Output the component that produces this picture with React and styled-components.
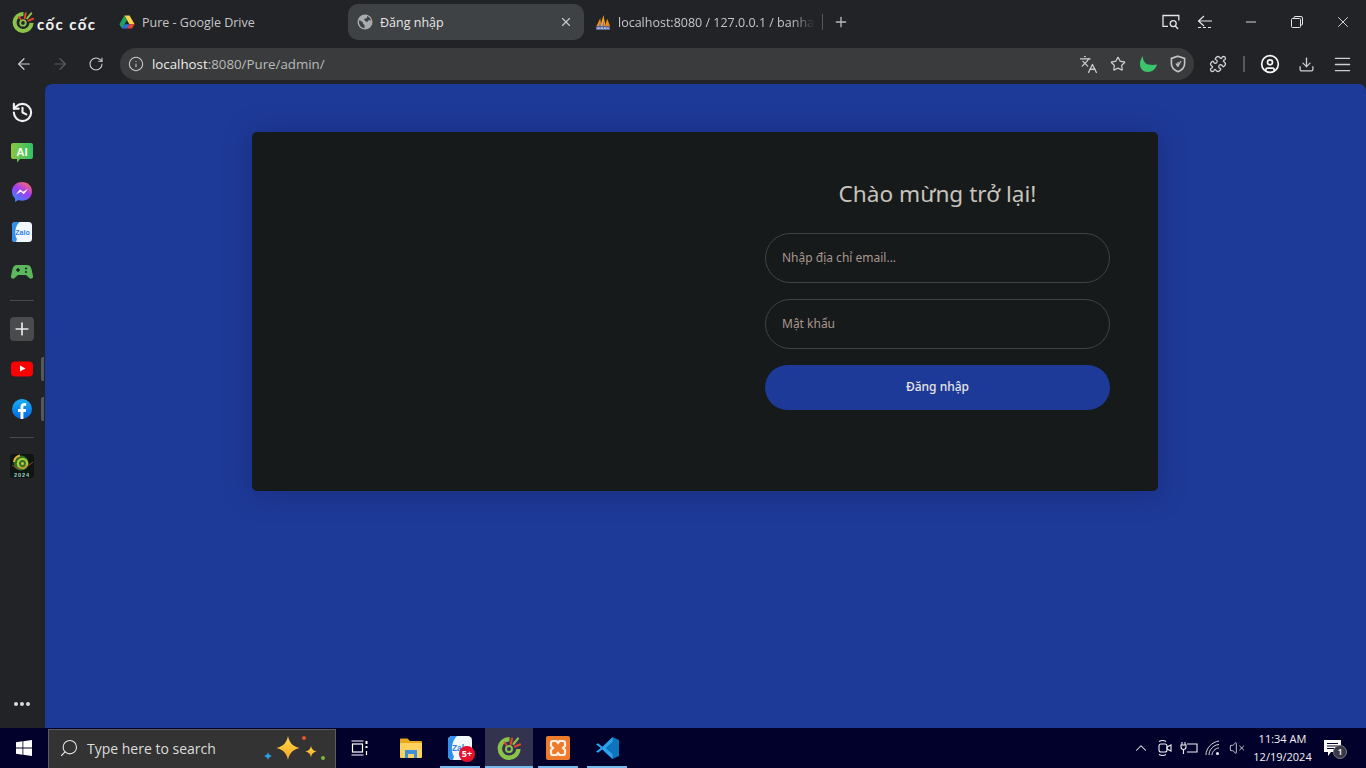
import React from "react";
import styled, { createGlobalStyle } from "styled-components";
import {
  ArrowLeft, ArrowRight, RotateCw, Info, Languages, Star, Puzzle, CircleUser, Download, Menu,
  Plus, X, Minus, History, Search, ChevronUp, VolumeX,
} from "lucide-react";

const Global = createGlobalStyle`
  html, body { margin: 0; padding: 0; height: 100%; overflow: hidden; background: #212326; }
  * { box-sizing: border-box; }
`;
const UI = `"Open Sans", "Noto Sans", sans-serif`;
const FORM = `"Noto Sans", "Open Sans", sans-serif`;

const Window = styled.div`display: flex; flex-direction: column; width: 1366px; height: 768px; background: #212326; font-family: ${UI};`;

/* Tab strip */
const TabStrip = styled.div`display: flex; align-items: flex-start; height: 48px; padding-top: 4px; color: #c4c6c8;`;
const BrandBox = styled.div`display: flex; align-items: center; gap: 3px; width: 110px; height: 36px; padding-left: 12px; flex: none;`;
const BrandText = styled.span`font: 700 15px "Lato", ${UI}; color: #f4f5f4; white-space: nowrap; margin-top: 3px; letter-spacing: 1.4px;`;
const Tabs = styled.div`display: flex; gap: 2px;`;
const Tab = styled.div`
  display: flex; align-items: center; gap: 7px; width: 236px; height: 36px; padding: 0 ${p => (p.$wide ? 7 : 12)}px 0 9px;
  border-radius: 10px; font-size: 12.5px; position: relative;
  background: ${p => (p.$active ? "#3f4244" : "transparent")};
  color: ${p => (p.$active ? "#e6e7e8" : "#c4c6c8")};
`;
const TabFavicon = styled.span`display: flex; width: 16px; height: 16px; flex: none; color: #a9abad;`;
const TabTitle = styled.span`
  flex: 1; white-space: nowrap; overflow: hidden;
  ${p => p.$fade && "-webkit-mask-image: linear-gradient(90deg,#000 88%,transparent 100%); mask-image: linear-gradient(90deg,#000 88%,transparent 100%);"}
`;
const TabClose = styled.span`display: flex; color: #c4c6c8; margin-right: -1px;`;
const TabSep = styled.span`width: 1px; height: 16px; margin-top: 10px; background: #55585a; flex: none;`;
const NewTab = styled.span`display: flex; align-items: center; justify-content: center; width: 36px; height: 36px; color: #b9bbbd; flex: none;`;
const StripRight = styled.div`display: flex; margin-left: auto; align-items: center; height: 36px;`;
const StripSlot = styled.span`display: flex; align-items: center; justify-content: center; width: ${p => p.$w}px; height: 36px; color: #e4e5e6; margin-right: ${p => p.$mr || 0}px;`;

/* Toolbar */
const Toolbar = styled.div`display: flex; align-items: flex-start; height: 36px; padding: 0 6px; flex: none;`;
const NavSlot = styled.span`display: flex; align-items: center; justify-content: center; width: 36px; height: 32px; color: ${p => (p.$dim ? "#5b5e60" : "#cdcfd1")}; flex: none;`;
const Address = styled.div`display: flex; align-items: center; flex: none; width: 1074px; height: 32px; margin: 0 6px; padding: 0 1px 0 8px; border-radius: 16px; background: #3a3b3c;`;
const InfoWrap = styled.span`display: flex; color: #c9cbcd; margin-right: 8px; flex: none;`;
const Url = styled.span`font-size: 13.3px; color: #b9bbbd; white-space: nowrap; flex: 1;`;
const Host = styled.span`color: #eceded;`;
const BarSlot = styled.span`display: flex; align-items: center; justify-content: center; width: 30px; height: 32px; color: #cdcfd1;`;
const ToolSep = styled.span`width: 2px; height: 16px; margin: 8px 7px; background: #56595b; flex: none;`;
const ProfileSlot = styled(NavSlot)`color: #f6f6f6;`;

/* Body */
const Body = styled.div`display: flex; flex: 1; min-height: 0;`;
const Sidebar = styled.div`display: flex; flex-direction: column; align-items: center; width: 45px; padding: 8px 1px 4px 0; flex: none;`;
const SideSlot = styled.div`display: flex; align-items: center; justify-content: center; width: 44px; height: 40px; position: relative; color: #f0f1f1; flex: none;`;
const Handle = styled.span`position: absolute; right: 0; top: 8px; width: 3px; height: 24px; border-radius: 2px 0 0 2px; background: #55585a;`;
const SideRule = styled.div`width: 24px; height: 1px; margin: 8px 0; background: #47494b; flex: none;`;
const SideEnd = styled(SideSlot)`margin-top: auto;`;
const PlusTile = styled.span`display: flex; align-items: center; justify-content: center; width: 24px; height: 24px; border-radius: 4px; background: #4a4b4c; color: #e9e9e9;`;
const Page = styled.main`flex: 1; background: #1e3a98; border-radius: 7px 7px 0 0; padding-top: 48px; display: flex; justify-content: center; align-items: flex-start; overflow: hidden;`;

/* Login card */
const Card = styled.section`
  display: grid; grid-template-columns: 453px 453px; width: 906px; height: 359px; margin-right: 1px;
  background: #171a1b; border-radius: 5px; box-shadow: 0 2px 28px rgba(20, 28, 90, .42);
`;
const Form = styled.form`grid-column: 2; display: flex; flex-direction: column; gap: 16px; padding: 48px 48px 0 60px; font-family: ${FORM};`;
const Title = styled.h1`margin: 0 0 8px; padding-bottom: 2px; height: 29px; font: 400 22.6px/27px ${FORM}; color: #c8c4bd; text-align: center; white-space: nowrap;`;
const Field = styled.input`
  display: block; width: 100%; height: 50px; padding: 0 16px 2px; border-radius: 25px;
  border: 1px solid #3f4446; background: #171a1b; color: #b2aca2; font: 400 12px ${FORM}; outline: none;
  &::placeholder { color: #a8968e; opacity: 1; }
`;
const Submit = styled.button`
  display: block; width: 100%; height: 45px; padding: 0 0 2px; border: 0; border-radius: 23px; background: #1e3a98;
  color: #e8e6e3; font: 500 12px ${FORM};
`;

/* Taskbar */
const Taskbar = styled.footer`display: flex; align-items: stretch; height: 40px; background: #02012c; flex: none; color: #fff;`;
const StartSlot = styled.span`display: flex; align-items: center; justify-content: center; width: 48px; flex: none;`;
const SearchBox = styled.div`display: flex; align-items: center; position: relative; width: 288px; margin-top: 1px; padding: 0 0 2px 10px; background: #333333; border: 1px solid #5c5c5c; border-bottom: 0; flex: none; color: #e6e6e6;`;
const SearchText = styled.span`font-size: 14px; margin-left: 8px; color: #dcdcdc; white-space: nowrap;`;
const Sparkles = styled.span`position: absolute; right: 2px; top: 1px; display: flex;`;
const TaskApps = styled.div`display: flex; gap: 1px; flex: none;`;
const TaskView = styled.span`display: flex; align-items: center; justify-content: center; width: 51px; padding-right: 3px; flex: none;`;
const AppSlot = styled.span`
  display: flex; align-items: center; justify-content: center; width: 48px; position: relative;
  background: ${p => (p.$active ? "#33334f" : "transparent")};
  &::after {
    content: ""; position: absolute; bottom: 0; height: 2px; background: #76b9ed;
    left: ${p => (p.$active ? 0 : 4)}px; right: ${p => (p.$active ? 0 : 4)}px;
    display: ${p => (p.$running ? "block" : "none")};
  }
`;
const Badge = styled.span`
  position: absolute; left: 23px; top: 18px; width: 16px; height: 16px; border-radius: 50%;
  background: #e8102a; color: #fff; font: 700 9px/16px ${UI}; text-align: center;
`;
const Tray = styled.div`display: flex; margin-left: auto; padding-right: 16px;`;
const TraySlot = styled.span`display: flex; align-items: center; justify-content: center; width: 24px; color: #f0f0f0;`;
const Clock = styled.div`display: flex; flex-direction: column; align-items: center; justify-content: center; width: 67px; font-size: 11px; line-height: 18px; color: #f2f2f2; white-space: nowrap;`;
const Notif = styled.span`display: flex; align-items: center; justify-content: center; width: 34px; position: relative;`;
const NotifCount = styled.span`
  position: absolute; left: 17px; top: 17px; width: 14px; height: 14px; border-radius: 50%;
  background: #3a3a44; border: 1px solid #77777f; color: #fff; font: 600 9px/12px ${UI}; text-align: center;
`;

/* Drawn logos */
const CocCocMark = ({ size = 22 }) => (
  <svg width={size} height={size} viewBox="0 0 24 24" fill="none">
    <path d="M12.500 3.200A9.300 9.300 0 1 0 21.400 13" stroke="#8bc34a" strokeWidth="4.400" />
    <circle cx="12" cy="13" r="3" stroke="#8bc34a" strokeWidth="2" />
    <path d="M15 2.500 13.800 8" stroke="#e2452f" strokeWidth="2.200" strokeLinecap="round" />
    <path d="M21 2.500 16.500 8" stroke="#8bc34a" strokeWidth="2.200" strokeLinecap="round" />
    <path d="M23 8.500 18 10.500" stroke="#e2452f" strokeWidth="2.200" strokeLinecap="round" />
    <path d="M7.500 6.500 9.500 9" stroke="#e2452f" strokeWidth="2" strokeLinecap="round" />
  </svg>
);
const DriveIcon = () => (
  <svg width="16" height="16" viewBox="0 0 16 16">
    <path d="M5.400 1.500h5.200l5 8.700H10.400z" fill="#ffd04b" />
    <path d="M5.400 1.500 8 6 3 14.600.4 10.200z" fill="#1fa463" />
    <path d="M10.600 10.200H5.600L3 14.600h5z" fill="#2f6fe0" />
    <path d="m15.600 10.200-2.600 4.400H8l2.500-4.400z" fill="#ea4335" />
  </svg>
);
const SiteGlobe = () => (
  <svg width="16" height="16" viewBox="0 0 16 16">
    <circle cx="8" cy="8" r="7.500" fill="#a9abad" />
    <path d="M2.500 6 6 8.500v1.200l1.500 1.300v3.200C4.500 13.800 2 11.400 2 8c0-.7.200-1.400.500-2zM10 1.900c2 .7 3.500 2.300 4 4.300h-2.500L10.500 8 8 7 7 5l3-1z" fill="#3f4244" />
  </svg>
);
const PmaIcon = () => (
  <svg width="17" height="17" viewBox="0 0 17 17">
    <path d="M1.500 12.500 5.500 4l1.300 8.500z" fill="#f29111" />
    <path d="M5.500 12.500 9 .5l2.200 12z" fill="#f8a01d" />
    <path d="M10.500 12.500 13 4.500l3 8z" fill="#f08a0c" />
    <path d="M4 12.500 5.500 8l1 4.500zM8 12.500 9 7l1.200 5.500z" fill="#6c78af" />
    <rect x="1" y="12.500" width="15" height="4" fill="#5f6b9f" rx=".5" />
    <path d="M2.500 14.500h12" stroke="#d8dcf0" strokeWidth="1.200" strokeDasharray="2.500 1" />
  </svg>
);
const RestoreIcon = () => (
  <svg width="12" height="12" viewBox="0 0 12 12" fill="none" stroke="currentColor">
    <path d="M3 2.500V1.500a1 1 0 0 1 1-1h6a1.500 1.500 0 0 1 1.500 1.500v6a1 1 0 0 1-1 1H9.500" />
    <rect x=".5" y="2.500" width="9" height="9" rx="1" />
  </svg>
);
const ScreenSearchIcon = () => (
  <svg width="18" height="16" viewBox="0 0 18 16" fill="none" stroke="currentColor" strokeWidth="1.300">
    <path d="M6 12.400H1V1.500h15.800v5" />
    <circle cx="11.200" cy="9.600" r="3" />
    <path d="m13.400 12 2.600 3" />
  </svg>
);
const TabSearchIcon = () => (
  <svg width="16" height="14" viewBox="0 0 16 14" fill="none" stroke="currentColor" strokeWidth="1.200">
    <path d="M7 1 1.500 6l5.500 5M1.500 6H15" />
    <path d="M1 12.500h14" strokeDasharray="3 2" />
  </svg>
);
const MoonIcon = () => (
  <svg width="19" height="18" viewBox="0 0 19 18">
    <path d="M4 1C3.500 5 6 9 9.500 9.500c2.500.5 5.500.5 8.500 0C17 14 13 17 9 17 4 17 1 13.500 1 9c0-3 1-6 3-8z" fill="#3cc46c" />
  </svg>
);
const ShieldIcon = () => (
  <svg width="16" height="18" viewBox="0 0 16 18" fill="none">
    <path d="M8 1.200 14.600 3.400v5.200c0 3.800-2.600 6.600-6.600 8.200C4 15.200 1.400 12.400 1.400 8.600V3.400z" stroke="#c4c6c8" strokeWidth="1.600" />
    <path d="M8 12V7M8 11l3-5M6 8.500l1.500 2.500" stroke="#c4c6c8" strokeWidth="1.200" />
  </svg>
);
const AiIcon = () => (
  <svg width="22" height="26" viewBox="0 -4 22 26">
    <defs><linearGradient id="ai" x1="0" x2="1" y1="0" y2="0"><stop offset="0" stopColor="#8cc63f" /><stop offset="1" stopColor="#2fc26a" /></linearGradient></defs>
    <path d="M2 0h18a2 2 0 0 1 2 2v12a2 2 0 0 1-2 2H9l-3 3.500V16H2a2 2 0 0 1-2-2V2a2 2 0 0 1 2-2z" fill="url(#ai)" />
    <text x="11" y="12.500" textAnchor="middle" fontFamily="Liberation Sans" fontWeight="700" fontSize="11.500" fill="#f4f8ef">AI</text>
  </svg>
);
const MessengerIcon = () => (
  <svg width="22" height="22" viewBox="0 0 22 22">
    <defs><linearGradient id="ms" x1=".2" x2=".8" y1="1" y2="0"><stop offset="0" stopColor="#2e8cff" /><stop offset=".55" stopColor="#a33df0" /><stop offset="1" stopColor="#ff6a6a" /></linearGradient></defs>
    <path d="M11 1C5.200 1 1 5 1 10.400c0 2.900 1.200 5.300 3.100 7V21l3.300-1.900c1.100.4 2.300.6 3.600.6 5.800 0 10-4 10-9.300S16.800 1 11 1z" fill="url(#ms)" />
    <path d="m5 13.500 4-5.200 3 2.500 4.800-2.800-4 5.200-3-2.500z" fill="#fff" />
  </svg>
);
const ZaloIcon = ({ size = 20 }) => (
  <svg width={size} height={size} viewBox="0 0 20 20">
    <rect width="20" height="20" rx="3.500" fill="#f3f8fe" />
    <path d="M3.500 0h4C3 4 2 13 5 17l-1 3h-.5A3.500 3.500 0 0 1 0 16.500v-13A3.500 3.500 0 0 1 3.500 0z" fill="#2f8fea" />
    <text x="10.500" y="12.500" textAnchor="middle" fontFamily="Liberation Sans" fontWeight="700" fontSize="7" fill="#2f7fe0">Zalo</text>
  </svg>
);
const GameIcon = () => (
  <svg width="22" height="16" viewBox="0 0 22 16">
    <path d="M6 1h10c2.500 0 3.800 1.500 4.500 4L22 12c.4 2.200-2 3.500-3.700 2L15 11H7l-3.300 3C2 15.500-.4 14.200 0 12L1.500 5C2.200 2.500 3.500 1 6 1z" fill="#5cb85c" />
    <path d="M5 6h4M7 4v4" stroke="#1d2a1d" strokeWidth="1.500" />
    <circle cx="15" cy="4.500" r="1.100" fill="#1d2a1d" /><circle cx="15" cy="8" r="1.100" fill="#1d2a1d" />
  </svg>
);
const YoutubeIcon = () => (
  <svg width="22" height="16" viewBox="0 0 22 16">
    <rect width="22" height="15" y=".5" rx="4" fill="#f00" />
    <path d="m9 4.500 5.500 3-5.500 3z" fill="#fff" />
  </svg>
);
const FacebookIcon = () => (
  <svg width="20" height="20" viewBox="0 0 20 20">
    <defs><linearGradient id="fb" x1="0" x2="0" y1="0" y2="1"><stop offset="0" stopColor="#19aff5" /><stop offset="1" stopColor="#0566e2" /></linearGradient></defs>
    <circle cx="10" cy="10" r="10" fill="url(#fb)" />
    <path d="M8.500 20v-7H6v-3h2.500V7.800c0-2.500 1.500-3.800 3.700-3.800l2 .2v2.500h-1.300c-1.200 0-1.500.6-1.500 1.400V10h2.800l-.5 3h-2.300v7z" fill="#fff" />
  </svg>
);
const YearTile = () => (
  <svg width="24" height="24" viewBox="0 0 24 24">
    <rect width="24" height="24" rx="3" fill="#0e1512" />
    <ellipse cx="11" cy="9" rx="7.500" ry="7.500" fill="#2f6d2a" />
    <path d="M4 8a7.500 7.500 0 0 1 6-6.500" stroke="#e0b52f" strokeWidth="2" fill="none" />
    <circle cx="12.500" cy="9.500" r="4.600" fill="none" stroke="#a4cc3c" strokeWidth="2.400" />
    <circle cx="12.500" cy="9.500" r="1.500" fill="#d5c43a" />
    <path d="M2 11c6 6 14 3 21-3" fill="none" stroke="#c44a32" strokeWidth=".8" />
    <text x="12" y="22.500" textAnchor="middle" fontFamily="Liberation Sans" fontWeight="700" fontSize="5.600" letterSpacing=".9" fill="#9fd3c8">2024</text>
  </svg>
);
const WindowsIcon = () => (
  <svg width="16" height="16" viewBox="0 0 16 16" fill="#fff">
    <path d="M0 2.300 6.500 1.300V7.600H0zM7.300 1.200 16 0V7.600H7.300zM0 8.400H6.500V14.700L0 13.700zM7.300 8.400H16V16L7.300 14.800z" />
  </svg>
);
const SparkleGroup = () => (
  <svg width="72" height="36" viewBox="0 0 72 36">
    <defs><linearGradient id="sp" x1="0" x2="0" y1="0" y2="1"><stop offset="0" stopColor="#ffd84a" /><stop offset="1" stopColor="#f5a623" /></linearGradient></defs>
    <path d="M27 5c1.500 7 4.500 10 11.500 12C31.500 19 28.500 22 27 29c-1.500-7-4.500-10-11.500-12C22.500 15 25.500 12 27 5z" fill="url(#sp)" />
    <path d="M50 15c.6 3 2 4.500 5.500 5.500C52 21.500 50.600 23 50 26.500c-.6-3.500-2-5-5.500-6C48 19.500 49.400 18 50 15z" fill="url(#sp)" />
    <path d="M7 21c.4 2 1.300 3 4 4-2.700 1-3.600 2-4 4-.4-2-1.300-3-4-4 2.700-1 3.600-2 4-4z" fill="#2f9fe8" />
    <circle cx="43" cy="7" r="2" fill="#e4572e" />
    <circle cx="62" cy="27" r="2" fill="#7cb83c" />
  </svg>
);
const TaskViewIcon = () => (
  <svg width="18" height="16" viewBox="0 0 18 16" fill="none" stroke="#fff" strokeWidth="1.200">
    <path d="M.500 1h12M.500 15h12" />
    <rect x="1.500" y="4" width="10" height="8" />
    <path d="M15.500 1v3M15.500 6v2" strokeWidth="2" />
    <path d="M15.500 11v4" />
  </svg>
);
const ExplorerIcon = () => (
  <svg width="22" height="20" viewBox="0 0 22 20">
    <path d="M0 1.500A1 1 0 0 1 1 .5h6.500L10 3h11a1 1 0 0 1 1 1v2H0z" fill="#e8a91f" />
    <path d="M0 5h22v14a1 1 0 0 1-1 1H1a1 1 0 0 1-1-1z" fill="#fbd25e" />
    <path d="M5 12h12v8h-3v-4H8v4H5z" fill="#3c8fd8" />
  </svg>
);
const XamppIcon = () => (
  <svg width="24" height="24" viewBox="0 0 24 24">
    <rect width="24" height="24" rx="2" fill="#ee7a2c" />
    <path d="M7 5h3.500l1.500 2 1.500-2H17a2 2 0 0 1 2 2v3l-2 2 2 2v3a2 2 0 0 1-2 2h-3.500L12 17l-1.500 2H7a2 2 0 0 1-2-2v-3l2-2-2-2V7a2 2 0 0 1 2-2z" fill="none" stroke="#fdf0e4" strokeWidth="2.200" />
  </svg>
);
const VsCodeIcon = () => (
  <svg width="24" height="24" viewBox="0 0 24 24">
    <path d="M17.500 1 24 4v16l-6.500 3L7 13.500l4-3z" fill="#0e75bb" />
    <path d="M17.500 1 7.500 10.700 3 7.200 1 8.500 5.800 12 1 15.500l2 1.300 4.500-3.500 10 9.700V18L10.500 12 17.500 6z" fill="#2aa4ed" />
  </svg>
);
const MeetIcon = () => (
  <svg width="18" height="20" viewBox="0 0 18 20" fill="none" stroke="#f0f0f0" strokeWidth="1.100">
    <rect x="3" y="6" width="8" height="8" rx="2" />
    <path d="m11 9 4-2v6l-4-2z" />
    <path d="M3 3.500c2-1.200 5-1.200 7 0M3 16.500c2 1.200 5 1.200 7 0" />
  </svg>
);
const PowerIcon = () => (
  <svg width="18" height="14" viewBox="0 0 18 14" fill="none" stroke="#f0f0f0" strokeWidth="1.100">
    <path d="M7 3h10v8H7" />
    <path d="M2 1v3M5 1v3M1 4h5v2a2.500 2.500 0 0 1-5 0zM3.500 8.500V13" />
  </svg>
);
const WifiIcon = () => (
  <svg width="16" height="16" viewBox="0 0 16 16" fill="none" stroke="#d8d8d8" strokeWidth="1">
    <path d="M1 15C1 8 7 2 14 1M4 15c0-5 4-10 10-10.500M7 15c0-3 3-7 7-7" />
    <circle cx="12.500" cy="13.500" r="1.500" fill="#f0f0f0" stroke="none" />
  </svg>
);
const BubbleIcon = () => (
  <svg width="20" height="18" viewBox="0 0 20 18">
    <path d="M1 1h17v12H8l-3 4v-4H1z" fill="#fff" />
    <path d="M4 4.500h11M4 7h11M4 9.500h7" stroke="#02012c" strokeWidth="1" />
  </svg>
);

export default function App() {
  return (
    <Window>
      <Global />
      <TabStrip>
        <BrandBox>
          <CocCocMark size={22} />
          <BrandText>cốc cốc</BrandText>
        </BrandBox>
        <Tabs>
          <Tab>
            <TabFavicon><DriveIcon /></TabFavicon>
            <TabTitle>Pure - Google Drive</TabTitle>
          </Tab>
          <Tab $active>
            <TabFavicon><SiteGlobe /></TabFavicon>
            <TabTitle>Đăng nhập</TabTitle>
            <TabClose><X size={14} /></TabClose>
          </Tab>
          <Tab $wide>
            <TabFavicon><PmaIcon /></TabFavicon>
            <TabTitle $fade>localhost:8080 / 127.0.0.1 / banhang</TabTitle>
          </Tab>
        </Tabs>
        <TabSep />
        <NewTab><Plus size={16} /></NewTab>
        <StripRight>
          <StripSlot $w={34}><ScreenSearchIcon /></StripSlot>
          <StripSlot $w={34} $mr={6}><TabSearchIcon /></StripSlot>
          <StripSlot $w={46}><Minus size={16} strokeWidth={1.4} /></StripSlot>
          <StripSlot $w={46}><RestoreIcon /></StripSlot>
          <StripSlot $w={46}><X size={18} strokeWidth={1.2} /></StripSlot>
        </StripRight>
      </TabStrip>

      <Toolbar>
        <NavSlot><ArrowLeft size={18} strokeWidth={1.6} /></NavSlot>
        <NavSlot $dim><ArrowRight size={18} strokeWidth={1.6} /></NavSlot>
        <NavSlot><RotateCw size={16} strokeWidth={1.6} /></NavSlot>
        <Address>
          <InfoWrap><Info size={16} strokeWidth={1.6} /></InfoWrap>
          <Url><Host>localhost</Host>:8080/Pure/admin/</Url>
          <BarSlot><Languages size={19} strokeWidth={1.6} /></BarSlot>
          <BarSlot><Star size={16} strokeWidth={1.8} /></BarSlot>
          <BarSlot><MoonIcon /></BarSlot>
          <BarSlot><ShieldIcon /></BarSlot>
        </Address>
        <NavSlot><Puzzle size={18} strokeWidth={1.7} /></NavSlot>
        <ToolSep />
        <ProfileSlot><CircleUser size={20} strokeWidth={2} /></ProfileSlot>
        <NavSlot><Download size={17} strokeWidth={1.8} /></NavSlot>
        <NavSlot><Menu size={21} strokeWidth={1.7} /></NavSlot>
      </Toolbar>

      <Body>
        <Sidebar>
          <SideSlot><History size={23} strokeWidth={2.2} /></SideSlot>
          <SideSlot><AiIcon /></SideSlot>
          <SideSlot><MessengerIcon /></SideSlot>
          <SideSlot><ZaloIcon /></SideSlot>
          <SideSlot><GameIcon /></SideSlot>
          <SideRule />
          <SideSlot><PlusTile><Plus size={20} strokeWidth={2} /></PlusTile></SideSlot>
          <SideSlot><YoutubeIcon /><Handle /></SideSlot>
          <SideSlot><FacebookIcon /><Handle /></SideSlot>
          <SideRule />
          <SideSlot><YearTile /></SideSlot>
          <SideEnd>
            <svg width="16" height="4" viewBox="0 0 16 4" fill="#d8dadb"><circle cx="2" cy="2" r="2" /><circle cx="8" cy="2" r="2" /><circle cx="14" cy="2" r="2" /></svg>
          </SideEnd>
        </Sidebar>
        <Page>
          <Card>
            <Form onSubmit={e => e.preventDefault()}>
              <Title>Chào mừng trở lại!</Title>
              <Field type="email" placeholder="Nhập địa chỉ email..." />
              <Field type="password" placeholder="Mật khẩu" />
              <Submit type="submit">Đăng nhập</Submit>
            </Form>
          </Card>
        </Page>
      </Body>

      <Taskbar>
        <StartSlot><WindowsIcon /></StartSlot>
        <SearchBox>
          <Search size={20} strokeWidth={1.3} style={{ transform: "scaleX(-1)" }} />
          <SearchText>Type here to search</SearchText>
          <Sparkles><SparkleGroup /></Sparkles>
        </SearchBox>
        <TaskView><TaskViewIcon /></TaskView>
        <TaskApps>
          <AppSlot><ExplorerIcon /></AppSlot>
          <AppSlot $running><ZaloIcon size={24} /><Badge>5+</Badge></AppSlot>
          <AppSlot $running $active><CocCocMark size={24} /></AppSlot>
          <AppSlot $running><XamppIcon /></AppSlot>
          <AppSlot $running><VsCodeIcon /></AppSlot>
        </TaskApps>
        <Tray>
          <TraySlot><ChevronUp size={18} strokeWidth={1.4} /></TraySlot>
          <TraySlot><MeetIcon /></TraySlot>
          <TraySlot><PowerIcon /></TraySlot>
          <TraySlot><WifiIcon /></TraySlot>
          <TraySlot><VolumeX size={16} strokeWidth={1.2} /></TraySlot>
          <Clock><span>11:34 AM</span><span>12/19/2024</span></Clock>
          <Notif><BubbleIcon /><NotifCount>1</NotifCount></Notif>
        </Tray>
      </Taskbar>
    </Window>
  );
}
